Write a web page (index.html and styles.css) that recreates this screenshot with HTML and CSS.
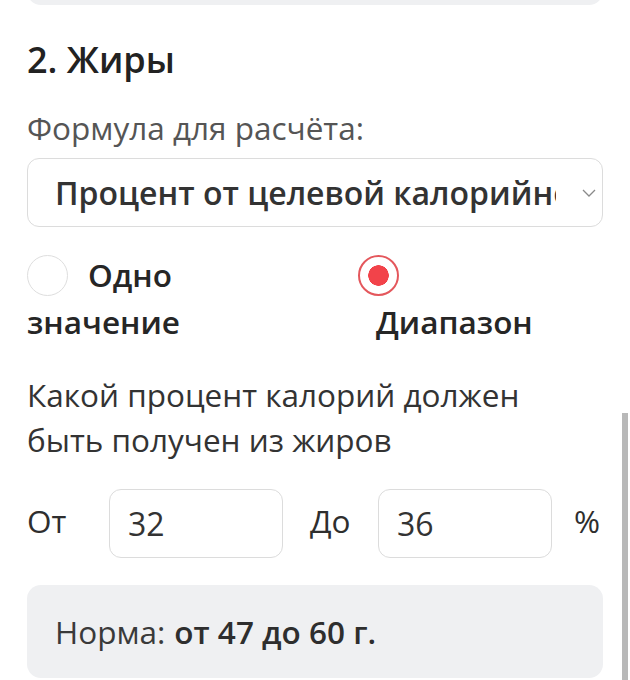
FILE: index.html
```html
<!DOCTYPE html>
<html lang="ru">
<head>
<meta charset="utf-8">
<link rel="stylesheet" href="styles.css">
</head>
<body>
<div class="page">
  <div class="prev-card"></div>
  <h2 class="title">2. Жиры</h2>
  <div class="field-label">Формула для расчёта:</div>
  <div class="select">
    <span class="select-text">Процент от целевой калорийности</span>
    <svg class="chev" width="14" height="8" viewBox="0 0 14 8"><path d="M1 1 L7 7 L13 1" fill="none" stroke="#8a8a8a" stroke-width="1.3"/></svg>
  </div>
  <div class="radios">
    <label class="opt opt-one"><span class="radio"></span><span class="opt-text">Одно значение</span></label>
    <label class="opt opt-two"><span class="radio checked"></span><span class="opt-text shifted">Диапазон</span></label>
  </div>
  <p class="desc">Какой процент калорий должен быть получен из жиров</p>
  <div class="range">
    <span class="rl rl-from">От</span>
    <input class="num" type="text" value="32">
    <span class="rl rl-to">До</span>
    <input class="num" type="text" value="36">
    <span class="pct">%</span>
  </div>
  <div class="norm">Норма: <b>от 47 до 60 г.</b></div>
</div>
<div class="scrollbar"></div>
</body>
</html>
```
FILE: styles.css
```css
html, body {
  margin: 0;
  padding: 0;
  background: #fff;
}
body {
  font-family: "Open Sans", "Noto Sans", sans-serif;
  color: #2e2e2e;
  width: 630px;
  height: 680px;
  overflow: hidden;
  position: relative;
}
.page {
  padding: 0 27px;
}
.prev-card {
  height: 40px;
  margin-top: -35px;
  background: #eff0f2;
  border-radius: 14px;
}
.title {
  margin: 33px 0 0;
  font-size: 36px;
  font-weight: 600;
  line-height: 43px;
  color: #222;
}
.field-label {
  margin-top: 29px;
  font-size: 31.5px;
  line-height: 36px;
  color: #555;
}
.select {
  margin-top: 12px;
  height: 69px;
  box-sizing: border-box;
  border: 1.5px solid #dcdcdc;
  border-radius: 12px;
  display: flex;
  align-items: center;
  padding: 0 6px 0 27px;
}
.select-text {
  flex: 0 0 501px;
  overflow: hidden;
  white-space: nowrap;
  font-size: 32px;
  font-weight: 600;
  color: #333;
}
.chev {
  margin-left: auto;
}
.radios {
  margin-top: 25px;
  display: flex;
}
.opt {
  display: block;
  font-size: 31.5px;
  font-weight: 600;
  line-height: 46px;
  color: #262626;
}
.opt-one {
  width: 250px;
}
.opt-two {
  margin-left: 81px;
  width: 200px;
}
.radio {
  display: inline-block;
  box-sizing: border-box;
  width: 41px;
  height: 41px;
  border: 1.5px solid #dedede;
  border-radius: 50%;
  vertical-align: middle;
  margin-right: 20px;
  position: relative;
  top: -3px;
}
.radio.checked {
  border: 2px solid #e4575c;
  background: radial-gradient(circle, #f2434a 0 10px, transparent 10.5px);
}
.shifted {
  display: inline-block;
  padding-left: 18px;
}
.desc {
  margin: 27px 0 0;
  max-width: 530px;
  font-size: 31.5px;
  line-height: 45px;
  color: #333;
}
.range {
  margin-top: 27px;
  display: flex;
  align-items: center;
  height: 69px;
}
.rl {
  font-size: 31.5px;
  color: #2e2e2e;
  margin-top: -6px;
}
.rl-from {
  width: 82px;
}
.rl-to {
  width: 68px;
  margin-left: 27px;
}
.num {
  width: 174px;
  height: 69px;
  box-sizing: border-box;
  border: 1.5px solid #dcdcdc;
  border-radius: 12px;
  padding: 0 0 0 18px;
  font-family: inherit;
  font-size: 32px;
  color: #333;
  background: #fff;
  outline: none;
}
.pct {
  margin-left: 22px;
  font-size: 31.5px;
  color: #2e2e2e;
  margin-top: -6px;
}
.norm {
  margin-top: 27px;
  height: 93px;
  box-sizing: border-box;
  background: #eff0f2;
  border-radius: 14px;
  padding: 0 28px;
  display: flex;
  align-items: center;
  gap: 9px;
  font-size: 31.5px;
  color: #3a3a3a;
}
.norm b {
  font-weight: 600;
  color: #2e2e2e;
}
.scrollbar {
  position: absolute;
  right: 2px;
  top: 413px;
  width: 6px;
  height: 267px;
  background: #b8b8b8;
}
```
